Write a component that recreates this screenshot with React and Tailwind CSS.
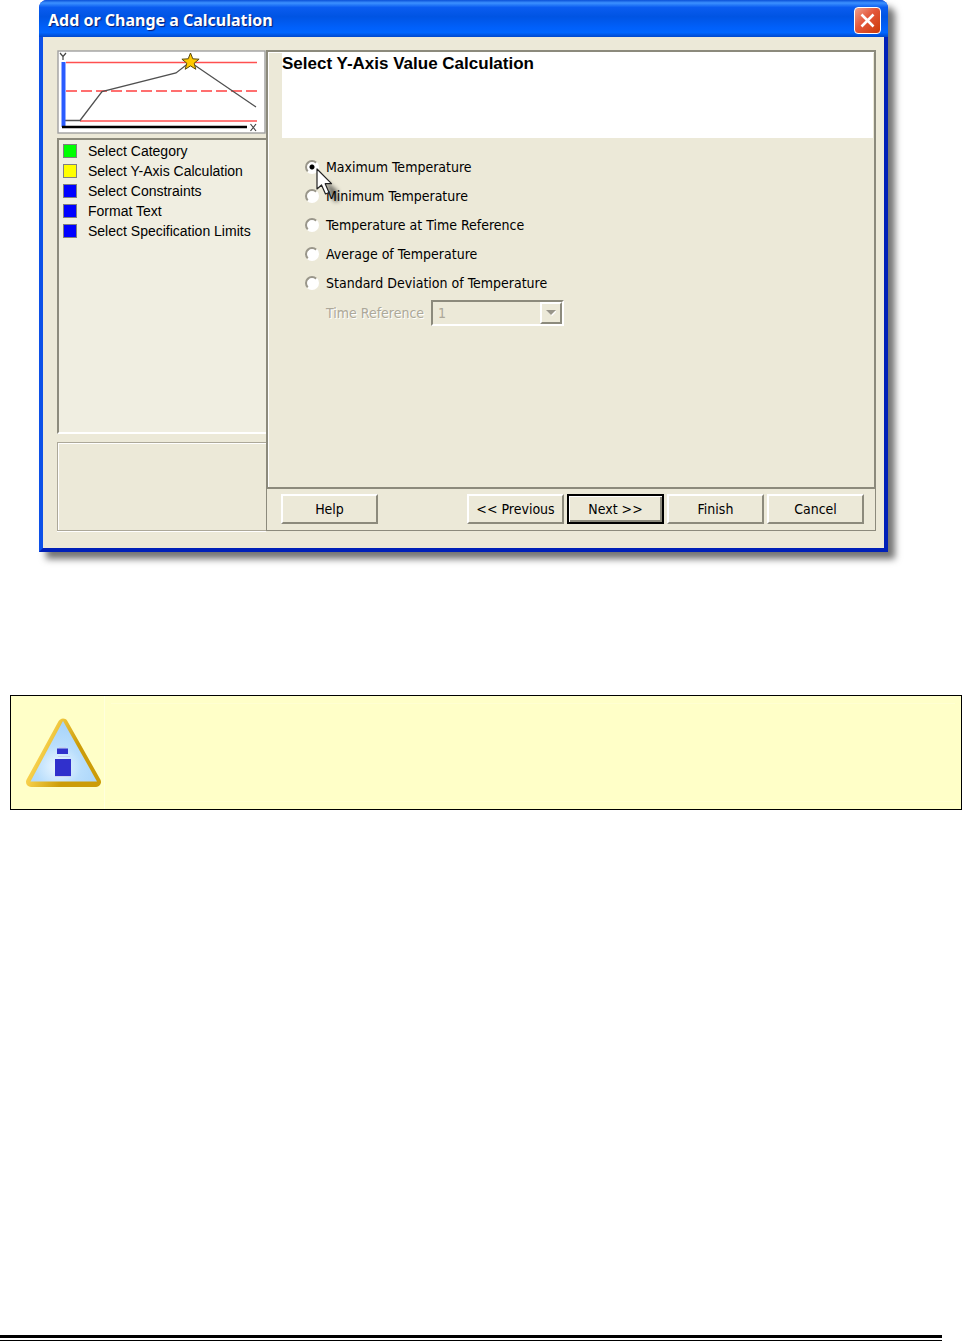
import clsx from 'clsx';

const steps = [
  { label: 'Select Category', color: 'bg-[#00ff00]' },
  { label: 'Select Y-Axis Calculation', color: 'bg-[#ffff00]' },
  { label: 'Select Constraints', color: 'bg-[#0000ff]' },
  { label: 'Format Text', color: 'bg-[#0000ff]' },
  { label: 'Select Specification Limits', color: 'bg-[#0000ff]' },
];

const options = [
  'Maximum Temperature',
  'Minimum Temperature',
  'Temperature at Time Reference',
  'Average of Temperature',
  'Standard Deviation of Temperature',
];

function ProfileChart() {
  return (
    <svg viewBox="57 50 209 84" className="block h-[84px] w-[209px]" aria-hidden="true">
      <rect x="58" y="51" width="207" height="82" fill="#fff" stroke="#a0a0a0" strokeWidth="1.4" />
      <path d="M66 62.5H257M80 121H257" stroke="#ff5050" strokeWidth="1.5" />
      <path d="M66 91H257" stroke="#ff4040" strokeWidth="1.5" strokeDasharray="11 4" />
      <path d="M65 120.5H80L102 91.5L176 73L190 62L256 107" fill="none" stroke="#505050" strokeWidth="1.3" />
      <path d="M63.5 62V127" stroke="#2a5cff" strokeWidth="4" />
      <path d="M62 127H247" stroke="#000" strokeWidth="2.4" />
      <path d="M60 53L63 56.5L66 53M63 56.5V60" fill="none" stroke="#444" strokeWidth="1.2" />
      <path d="M250.5 124L256 131M256 124L250.5 131" stroke="#444" strokeWidth="1.2" />
      <path
        d="M190.5 53L192.8 58.8L199.1 59.2L194.2 63.2L195.8 69.3L190.5 65.9L185.2 69.3L186.800 63.2L181.9 59.2L188.2 58.8Z"
        fill="#ffc800"
        stroke="#5a4a10"
        strokeWidth="1"
      />
    </svg>
  );
}

function Cursor() {
  return (
    <svg viewBox="0 0 32 38" className="pointer-events-none absolute top-[16px] left-[11px] z-10 h-[38px] w-[32px]" aria-hidden="true">
      <defs>
        <filter id="cursor-shadow" x="-50%" y="-50%" width="200%" height="200%">
          <feGaussianBlur stdDeviation="2" />
        </filter>
      </defs>
      <path d="M9 12L23 24L20 26L24 32L19 34L14 27Z" fill="#000" opacity="0.5" filter="url(#cursor-shadow)" />
      <path
        d="M1 1V21L5.5 17L9.5 26L13 24.5L9.2 15.7H15.5Z"
        fill="#fff"
        stroke="#222"
        strokeWidth="1.2"
        strokeLinejoin="round"
      />
    </svg>
  );
}

function WarningIcon() {
  return (
    <svg viewBox="25 718 77 71" className="block h-[71px] w-[77px]" aria-hidden="true">
      <defs>
        <linearGradient id="rim" x1="0" y1="0" x2="1" y2="0.4">
          <stop offset="0.3" stopColor="#f6cf4a" />
          <stop offset="0.75" stopColor="#cc9c08" />
        </linearGradient>
        <radialGradient id="glass" cx="0.42" cy="0.75" r="0.7">
          <stop offset="0" stopColor="#eef8ff" />
          <stop offset="0.5" stopColor="#b9defc" />
          <stop offset="1" stopColor="#a8d4fa" />
        </radialGradient>
      </defs>
      <path d="M63 724.5L96 783H31Z" fill="url(#rim)" stroke="url(#rim)" strokeWidth="10" strokeLinejoin="round" />
      <path d="M63 722L97 782.5H30.5Z" fill="url(#glass)" />
      <rect x="57" y="749.5" width="11" height="5.5" fill="#3030cc" />
      <rect x="55" y="760" width="16" height="17" fill="#3030cc" />
      <path d="M59 748.5H66M58 757.5H70M55 777.5H71" stroke="#c9c6e8" strokeWidth="0.7" />
    </svg>
  );
}

function DialogButton({ children, primary }) {
  return (
    <button
      type="button"
      className={clsx(
        'h-[30px] w-[97px] border-2 bg-[#ece9d8] text-sm leading-5 text-black',
        primary
          ? 'border-black shadow-[inset_1px_1px_0_#fff,inset_-2px_-2px_0_#8c8a7c]'
          : 'border-t-white border-r-[#8c8a7c] border-b-[#8c8a7c] border-l-white'
      )}
    >
      {children}
    </button>
  );
}

function StepsPanel() {
  return (
    <div className="flex w-[209px] shrink-0 flex-col">
      <ProfileChart />
      <ul className="mt-1 h-[296px] border-2 border-t-[#8c8a7c] border-r-0 border-b-white border-l-[#8c8a7c] bg-[#f0eee1] px-1 pt-px font-['Liberation_Sans',sans-serif]">
        {steps.map((step) => (
          <li key={step.label} className="flex h-5 items-center gap-[11px] text-sm leading-5 whitespace-nowrap">
            <span className={clsx('h-[14px] w-[14px] border border-[#808080]', step.color)} />
            {step.label}
          </li>
        ))}
      </ul>
      <div className="mt-2 h-[89px] border border-r-0 border-[#aca899] shadow-[inset_1px_1px_0_#fff,0_1px_0_#fff]" />
    </div>
  );
}

function OptionsForm() {
  return (
    <form className="mt-[14px] ml-[37px] text-sm leading-5">
      {options.map((option, index) => (
        <label key={option} className="relative flex h-[29px] w-max items-center gap-[7px]">
          <input
            type="radio"
            name="calculation"
            defaultChecked={index === 0}
            className="h-[14px] w-[14px] appearance-none rounded-full border-2 border-t-[#99968a] border-r-white border-b-white border-l-[#99968a] bg-white checked:bg-[radial-gradient(circle,#000_2px,#fff_3px)]"
          />
          {option}
          {index === 0 && <Cursor />}
        </label>
      ))}
      <div className="flex h-8 items-center pl-[21px] text-[#aca899]">
        <label htmlFor="time-reference" className="w-[105px] whitespace-nowrap [text-shadow:1px_1px_0_#fff]">
          Time Reference
        </label>
        <div className="relative">
          <select
            id="time-reference"
            disabled
            className="block h-[26px] w-[133px] appearance-none border-2 border-t-[#8c8a7c] border-r-white border-b-white border-l-[#8c8a7c] bg-[#ece9d8] pl-[5px] text-sm leading-5 text-[#aca899] opacity-100"
          >
            <option>1</option>
          </select>
          <span className="pointer-events-none absolute top-[2px] right-[2px] flex h-[22px] w-[22px] items-center justify-center border-2 border-t-white border-r-[#8c8a7c] border-b-[#8c8a7c] border-l-white">
            <svg viewBox="0 0 10 6" className="h-[6px] w-[10px]" aria-hidden="true">
              <path d="M1 1H11L6 6Z" fill="#fff" />
              <path d="M0 0H10L5 5Z" fill="#99968a" />
            </svg>
          </span>
        </div>
      </div>
    </form>
  );
}

function CalculationDialog() {
  return (
    <section className="mr-[74px] ml-[39px] rounded-t-lg bg-[#0831d9] shadow-[7px_7px_7px_0_rgba(0,0,0,0.55)]">
      <header className="flex h-[37px] items-center justify-between rounded-t-lg bg-[linear-gradient(180deg,#0a50d8_0%,#3c91ff_8%,#0a5cf0_20%,#0054e3_45%,#0060fb_75%,#0066ff_88%,#0048cc_100%)] pt-[3px] pr-[7px] pl-[9px]">
        <h1 className="font-['Noto_Sans',sans-serif] text-base leading-5 font-bold text-white [text-shadow:1px_1px_1px_#0a1a70]">
          Add or Change a Calculation
        </h1>
        <button
          type="button"
          aria-label="Close"
          className="flex h-[27px] w-[27px] items-center justify-center rounded border border-white bg-[linear-gradient(135deg,#f0a08c_0%,#e3573a_45%,#cc3a08_100%)]"
        >
          <svg viewBox="0 0 15 15" className="h-[15px] w-[15px]" aria-hidden="true">
            <path d="M1.5 1.5L13.5 13.5M13.5 1.5L1.5 13.5" stroke="#fff" strokeWidth="2.6" />
          </svg>
        </button>
      </header>

      <div className="border-r-4 border-b-4 border-l-4 border-r-[#0020b8] border-b-[#0020b8] border-l-[#0c50e8]">
        <div className="flex bg-[#ece9d8] pt-[13px] pr-2 pb-[17px] pl-[14px]">
          <StepsPanel />

          <div className="flex min-w-0 flex-1 flex-col">
            <div className="flex-1 border-2 border-[#8c8a7c] shadow-[inset_1px_1px_0_#fff]">
              <div className="mr-px ml-[14px] h-[86px] bg-white">
                <h2 className="font-['Liberation_Sans',sans-serif] text-[17px] leading-6 font-bold">
                  Select Y-Axis Value Calculation
                </h2>
              </div>
              <OptionsForm />
            </div>
            <div className="flex h-[42px] items-center justify-between border border-t-0 border-[#8c8a7c] pr-[11px] pb-[2px] pl-[14px]">
              <DialogButton>Help</DialogButton>
              <div className="flex gap-[3px]">
                <DialogButton>&lt;&lt; Previous</DialogButton>
                <DialogButton primary>Next &gt;&gt;</DialogButton>
                <DialogButton>Finish</DialogButton>
                <DialogButton>Cancel</DialogButton>
              </div>
            </div>
          </div>
        </div>
      </div>
    </section>
  );
}

export default function App() {
  return (
    <main className="flex min-h-screen flex-col bg-white font-['DejaVu_Sans_Condensed','DejaVu_Sans',sans-serif] text-black">
      <CalculationDialog />

      <aside className="mt-[143px] ml-[10px] flex h-[115px] border border-black bg-[#ffffc8]">
        <div className="flex w-[94px] items-center border-r border-[#ffffdc] pl-[14px]">
          <WarningIcon />
        </div>
        <div className="mx-[6px] my-[7px] flex-1 border-y border-[#ffffd2]" />
      </aside>

      {/* page footer rule */}
      <footer className="mt-auto mr-5 h-[6px] border-t-3 border-b border-black" />
    </main>
  );
}
